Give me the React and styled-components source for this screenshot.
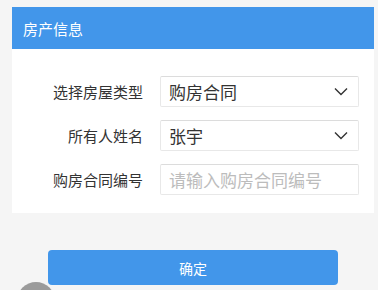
import React from "react";
import styled, { createGlobalStyle } from "styled-components";

const Global = createGlobalStyle`
  html, body { margin: 0; padding: 0; background: #f5f5f5; }
  body { font-family: "Noto Sans CJK SC", "Noto Sans", sans-serif; overflow: hidden; }
`;

const Page = styled.div`
  position: relative;
  width: 378px;
  height: 290px;
  padding: 7px 4px 0 12px;
  box-sizing: border-box;
  background: #f5f5f5;
  overflow: hidden;
`;

const Card = styled.div`
  background: #fff;
`;

const Header = styled.div`
  height: 42px;
  background: #4296ea;
  color: #fff;
  font-size: 15px;
  display: flex;
  align-items: center;
  padding-left: 11px;
`;

const Form = styled.div`
  display: flex;
  flex-direction: column;
  gap: 13px;
  padding: 27px 15px 18px 0;
`;

const Row = styled.div`
  display: grid;
  grid-template-columns: 131px 199px;
  column-gap: 17px;
  align-items: center;
`;

const Label = styled.div`
  text-align: right;
  font-size: 15px;
  color: #333;
`;

const Field = styled.div`
  height: 31px;
  box-sizing: border-box;
  border: 1px solid #e8e8e8;
  border-top-color: #dcdcdc;
  border-radius: 2px;
  display: flex;
  align-items: center;
  padding: 0 10px 0 8px;
  font-size: 17px;
  color: ${(p) => (p.$placeholder ? "#bcbcbc" : "#333")};
  background: #fff;
`;

const Value = styled.span`
  flex: 1;
`;

const ButtonWrap = styled.div`
  display: flex;
  padding: 37px 0 0 36px;
`;

const Button = styled.button`
  width: 290px;
  height: 35px;
  border: none;
  border-radius: 4px;
  background: #4296ea;
  color: #fff;
  font-size: 14px;
  font-family: inherit;
  padding: 0;
`;

const Bubble = styled.div`
  position: absolute;
  left: 17px;
  top: 282px;
  width: 38px;
  height: 38px;
  border-radius: 50%;
  background: #9b9b9b;
`;

const Chevron = () => (
  <svg width="14" height="9" viewBox="0 0 14 9" fill="none">
    <path d="M1 1.5 L7 7.5 L13 1.5" stroke="#333" strokeWidth="1.4" />
  </svg>
);

export default function App() {
  return (
    <>
      <Global />
      <Page>
        <Card>
          <Header>房产信息</Header>
          <Form>
            <Row>
              <Label>选择房屋类型</Label>
              <Field>
                <Value>购房合同</Value>
                <Chevron />
              </Field>
            </Row>
            <Row>
              <Label>所有人姓名</Label>
              <Field>
                <Value>张宇</Value>
                <Chevron />
              </Field>
            </Row>
            <Row>
              <Label>购房合同编号</Label>
              <Field $placeholder>
                <Value>请输入购房合同编号</Value>
              </Field>
            </Row>
          </Form>
        </Card>
        <ButtonWrap>
          <Button>确定</Button>
        </ButtonWrap>
        <Bubble />
      </Page>
    </>
  );
}
